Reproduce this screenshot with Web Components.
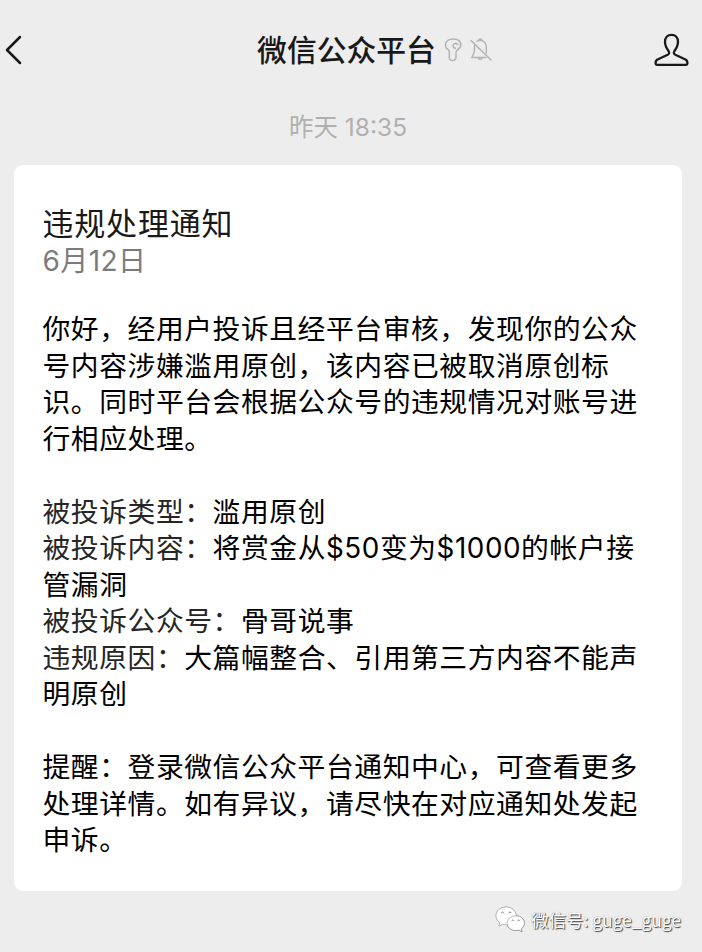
<!DOCTYPE html>
<html lang="zh-CN">
<head>
<meta charset="utf-8">
<title>微信公众平台</title>
<style>
    body {margin: 0; background: #ededed; font-family: Inter, "Noto Sans CJK SC", sans-serif; color: #000;}
</style>
</head>
<body>
<chat-page>
    <chat-header slot="header">微信公众平台</chat-header>
    <chat-time>昨天 18:35</chat-time>
    <notice-card>
        <span slot="title">违规处理通知</span>
        <span slot="date">6月12日</span>
        <notice-text>你好，经用户投诉且经平台审核，发现你的公众<br>号内容涉嫌滥用原创，该内容已被取消原创标<br>识。同时平台会根据公众号的违规情况对账号进<br>行相应处理。</notice-text>
        <div>
            <notice-row label="被投诉类型：">滥用原创</notice-row>
            <notice-row label="被投诉内容：">将赏金从$50变为$1000的帐户接<br>管漏洞</notice-row>
            <notice-row label="被投诉公众号：">骨哥说事</notice-row>
            <notice-row label="违规原因：">大篇幅整合、引用第三方内容不能声<br>明原创</notice-row>
        </div>
        <notice-text>提醒：登录微信公众平台通知中心，可查看更多<br>处理详情。如有异议，请尽快在对应通知处发起<br>申诉。</notice-text>
    </notice-card>
    <account-mark slot="footer">微信号: guge_guge</account-mark>
</chat-page>

<script>
function define(name, html, setup) {
    const template = document.createElement('template');
    template.innerHTML = html;

    customElements.define(name, class extends HTMLElement {
        constructor() {
            super();
            this.attachShadow({mode: 'open'});
            this.shadowRoot.appendChild(template.content.cloneNode(true));
        }

        connectedCallback() {
            if (setup) {
                setup(this);
            }
        }
    });
}

define('chat-page', `
    <style>
    :host {display: flex; flex-direction: column; box-sizing: border-box; width: 702px; height: 952px; overflow: hidden;}
    main {display: flex; flex-direction: column; align-items: stretch; padding: 0 20px 0 14px;}
    </style>
    <slot name="header"></slot>
    <main><slot></slot></main>
    <slot name="footer"></slot>
`);

define('chat-header', `
    <style>
    :host {display: grid; grid-template-columns: 1fr auto 1fr; align-items: center; height: 100px; color: #191919;}
    svg {display: block; fill: none; stroke: currentColor; stroke-linecap: round; stroke-linejoin: round;}
    h1 {margin: 0; font-size: 29.8px; line-height: 40px; font-weight: 500; white-space: nowrap;}
    .title {display: flex; align-items: center; padding-left: 47px;}
    .state {display: flex; gap: 7px; padding-left: 7px; color: #b2b2b2;}
    .person {justify-self: end; margin-right: 13px;}
    </style>
    <svg class="back" width="24" height="32" viewBox="0 0 24 32" stroke-width="2.5"><path d="M20 3 7 16l13 13"/></svg>
    <div class="title">
        <h1><slot></slot></h1>
        <div class="state">
            <svg width="20" height="26" viewBox="0 0 20 26" stroke-width="1.5"><path d="M14.8 7.600C13.500 6 10.800 6.200 10.200 8c-.5 1.700.6 3.200 2.200 3.300M5.500 12.800C3.200 11.600 2.300 9.700 2.500 7.500 2.900 4.200 6 1.900 10 1.900c4.700 0 7.800 2.200 7.800 5.500 0 2.600-1.500 4.200-3.300 5.500-1.600 1.200-2 2.300-1.600 4.100.8 3.200 0 6.500-3.300 6.500-2.700 0-3.800-2.200-3.300-4.900.4-2.400.6-4.200-.8-5.800"/></svg>
            <svg width="22" height="26" viewBox="0 0 22 26" stroke-width="1.4"><path d="M1 3.500 21 23M7 4.600C8 3.800 9 3.400 10.300 3.400c3.500 0 6 2.800 6 6.200V16M4.800 7.500C4.300 9 4.500 11.500 4.400 14c-.1 2.500-1.700 4-2.600 6.500h14M8.800 3.500a1.500 1.500 0 0 1 3 0M8.500 21.500a1.800 1.500 0 0 0 3.400 0"/></svg>
        </div>
    </div>
    <svg class="person" width="35" height="34" viewBox="0 0 35 34" stroke-width="2.3"><path d="M17.500 1.800c-4 0-6.500 2.800-6.500 7 0 4.500 2 7.200 3.700 9.500.9 1.300.4 2.700-1 3.400L3.500 26.500c-1.600.8-2 2-1.900 4 0 .9.400 1.300 1.200 1.300h29.400c.8 0 1.200-.4 1.200-1.300.1-2-.3-3.200-1.900-4l-10.200-4.800c-1.400-.7-1.900-2.100-1-3.400C22 16 24 13.300 24 8.800c0-4.200-2.500-7-6.500-7z"/></svg>
`);

define('chat-time', `
    <style>
    :host {display: block; height: 65px; line-height: 54px; text-align: center; font-size: 24.5px; color: #b0b0b0;}
    </style>
    <slot></slot>
`);

define('notice-card', `
    <style>
    :host {display: flex; flex-direction: column; box-sizing: border-box; height: 726px; padding: 39px 28px 0 28.5px; border-radius: 9px; background: #fff;}
    h2 {margin: 0; font-size: 31px; line-height: 40px; font-weight: 400; letter-spacing: .8px; color: #191919;}
    .date {font-size: 28px; line-height: 34px; letter-spacing: .4px; color: #7b7b7b;}
    .body {display: flex; flex-direction: column; gap: 36.5px; padding-top: 33px; font-size: 27.8px; line-height: 36.5px; letter-spacing: .55px; white-space: nowrap;}
    </style>
    <h2><slot name="title"></slot></h2>
    <div class="date"><slot name="date"></slot></div>
    <div class="body"><slot></slot></div>
`);

define('notice-text', `
    <style>
    :host {display: block;}
    </style>
    <slot></slot>
`);

define('notice-row', `
    <style>
    :host {display: block;}
    .label {color: #262626;}
    </style>
    <span class="label"></span><slot></slot>
`, (row) => {
    row.shadowRoot.querySelector(".label").textContent = row.getAttribute("label");
});

define('account-mark', `
    <style>
    :host {display: flex; align-items: center; justify-content: flex-end; gap: 5px; height: 57px; padding-right: 21px; font: 17.4px/28px "Noto Sans CJK SC", sans-serif; color: #fff; text-shadow: 1px 1px 1px #444, 0 0 1px #888;}
    svg {display: block; filter: drop-shadow(.5px .5px .5px #777);}
    </style>
    <svg width="31" height="27" viewBox="0 0 32 28">
        <path fill="#fff" stroke="#aaa" stroke-width=".5" d="M11.500 1C5.500 1 1 5 1 10c0 3 1.500 5.500 4 7.200l-1 3.600 4-2c1.200.4 2.300.6 3.500.6 5.800 0 10.400-4.200 10.400-9.200S17.300 1 11.500 1z"/>
        <path fill="#fff" stroke="#888" stroke-width=".6" d="M21.500 10.200c-5 0-9 3.400-9 7.600s4 7.700 9 7.700c1 0 2-.2 3-.5l3.500 1.800-.9-3c2-1.400 3.400-3.600 3.400-6 0-4.200-4-7.600-9-7.600z"/>
        <g fill="none" stroke="#777" stroke-width=".8"><path d="M6.500 7.500a1.200 1.200 0 0 1 2.400 0M14.300 7.500a1.200 1.200 0 0 1 2.400 0M17.500 15.500a1 1 0 0 1 2 0M23.500 15.500a1 1 0 0 1 2 0"/></g>
    </svg>
    <span><slot></slot></span>
`);
</script>
</body>
</html>
